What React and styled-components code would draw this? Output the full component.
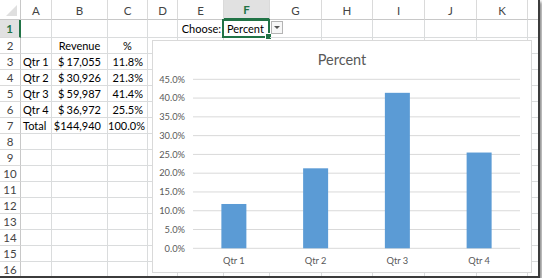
import React from 'react';
import styled, { createGlobalStyle } from 'styled-components';

const GlobalStyle = createGlobalStyle`
  body {
    margin: 0;
    background: #ffffff;
    font-family: Lato, 'Liberation Sans', sans-serif;
  }
`;

const COLS = ['A', 'B', 'C', 'D', 'E', 'F', 'G', 'H', 'I', 'J', 'K', ''];
const COL_WIDTHS = [21, 31, 56, 40, 30, 46, 46, 52, 51, 52, 52, 51, 20];
const ROW_COUNT = 16;

const quarters = [
  { name: 'Qtr 1', revenue: '17,055', pct: 11.8 },
  { name: 'Qtr 2', revenue: '30,926', pct: 21.3 },
  { name: 'Qtr 3', revenue: '59,987', pct: 41.4 },
  { name: 'Qtr 4', revenue: '36,972', pct: 25.5 },
];

const Frame = styled.div`
  position: relative;
  width: 538px;
  height: 276px;
  overflow: hidden;
  border-right: 2px solid #3c3c3c;
  border-bottom: 2px solid #3c3c3c;
  box-shadow: 2px 2px 3px rgba(0, 0, 0, 0.45);
`;

const Sheet = styled.div`
  display: grid;
  grid-template-columns: ${COL_WIDTHS.map((w) => `${w}px`).join(' ')};
  grid-template-rows: 20px 18px repeat(${ROW_COUNT - 1}, 16px);
  font-size: 11px;
  color: #000;
`;

const Corner = styled.div`
  position: relative;
  border-right: 1px solid #c8c8c8;
  border-bottom: 1px solid #c8c8c8;
  &::after {
    content: '';
    position: absolute;
    right: 3px;
    bottom: 3px;
    border-left: 11px solid transparent;
    border-bottom: 11px solid #dfdfdf;
  }
`;

const ColHead = styled.div`
  display: flex;
  align-items: center;
  justify-content: center;
  padding-top: 1px;
  box-sizing: border-box;
  font-size: 11.5px;
  background: ${(p) => (p.$active ? '#e1e1e1' : '#ffffff')};
  color: ${(p) => (p.$active ? '#217346' : '#444444')};
  font-weight: ${(p) => (p.$active ? 700 : 400)};
  border-right: 1px solid #dadada;
  border-bottom: ${(p) => (p.$active ? '2px solid #217346' : '1px solid #c8c8c8')};
`;

const RowHead = styled.div`
  display: flex;
  align-items: center;
  justify-content: center;
  box-sizing: border-box;
  font-size: 11.5px;
  background: ${(p) => (p.$active ? '#e1e1e1' : '#ffffff')};
  color: ${(p) => (p.$active ? '#217346' : '#444444')};
  font-weight: ${(p) => (p.$active ? 700 : 400)};
  border-right: ${(p) => (p.$active ? '2px solid #217346' : '1px solid #c8c8c8')};
  border-bottom: 1px solid #dadada;
`;

const Cell = styled.div`
  position: relative;
  display: flex;
  align-items: center;
  justify-content: ${(p) => p.$align || 'flex-start'};
  box-sizing: border-box;
  padding: 0 ${(p) => p.$padRight ?? 3}px 0 ${(p) => p.$padLeft ?? 3}px;
  border-right: 1px solid #dadcdd;
  border-bottom: 1px solid #dadcdd;
  white-space: nowrap;
  overflow: visible;
  z-index: ${(p) => (p.$front ? 2 : 'auto')};
`;

const Selection = styled.div`
  position: absolute;
  left: -2px;
  top: -1px;
  right: -1px;
  bottom: -1px;
  border: 2px solid #217346;
  pointer-events: none;
  &::after {
    content: '';
    position: absolute;
    right: -4px;
    bottom: -4px;
    width: 5px;
    height: 5px;
    background: #217346;
    border: 1px solid #ffffff;
  }
`;

const DropButton = styled.div`
  position: absolute;
  left: 1px;
  top: 1px;
  width: 12px;
  height: 13px;
  box-sizing: border-box;
  border: 1px solid #b4b4b4;
  background: #f7f7f7;
  display: flex;
  align-items: center;
  justify-content: center;
  &::before {
    content: '';
    border-left: 3px solid transparent;
    border-right: 3px solid transparent;
    border-top: 3px solid #555;
  }
`;

const ChartBox = styled.div`
  position: absolute;
  left: 152px;
  top: 40px;
  width: 380px;
  height: 233px;
  box-sizing: border-box;
  background: #ffffff;
  border: 1px solid #d9d9d9;
  display: flex;
  flex-direction: column;
  z-index: 3;
`;

const ChartTitle = styled.div`
  height: 30px;
  display: flex;
  align-items: center;
  justify-content: center;
  padding-top: 6px;
  box-sizing: border-box;
  font-size: 14.5px;
  color: #595959;
`;

const Plot = styled.svg`
  display: block;
  font-family: Lato, 'Liberation Sans', sans-serif;
  font-size: 9.3px;
  fill: #595959;
`;

function Chart() {
  const zeroY = 177.3;
  const unit = 169 / 45;
  const left = 40;
  const right = 367;
  const band = (right - left) / quarters.length;
  const ticks = [0, 5, 10, 15, 20, 25, 30, 35, 40, 45];
  return (
    <ChartBox>
      <ChartTitle>Percent</ChartTitle>
      <Plot width="378" height="201" viewBox="0 0 378 201">
        {ticks.map((t) => {
          const y = zeroY - t * unit;
          return (
            <g key={t}>
              <line x1={left} x2={right} y1={y} y2={y} stroke="#d9d9d9" strokeWidth="1" />
              <text x="32" y={y + 3.3} textAnchor="end">
                {t.toFixed(1)}%
              </text>
            </g>
          );
        })}
        {quarters.map((q, i) => {
          const cx = left + band * (i + 0.5);
          const h = q.pct * unit;
          return (
            <g key={q.name}>
              <rect x={cx - 12.5} y={zeroY - h} width="25" height={h} fill="#5b9bd5" />
              <text x={cx} y="193" textAnchor="middle">
                {q.name}
              </text>
            </g>
          );
        })}
      </Plot>
    </ChartBox>
  );
}

function cellContent(row, col) {
  if (row === 1) {
    if (col === 'E') return { text: 'Choose:', align: 'flex-end', padRight: 2, front: true };
    if (col === 'F') return { text: 'Percent', selected: true };
    if (col === 'G') return { drop: true };
  }
  if (row === 2) {
    if (col === 'B') return { text: 'Revenue', align: 'center' };
    if (col === 'C') return { text: '%', align: 'center' };
  }
  const q = quarters[row - 3];
  if (q) {
    if (col === 'A') return { text: q.name, padLeft: 2 };
    if (col === 'B') return { money: q.revenue };
    if (col === 'C') return { text: `${q.pct.toFixed(1)}%`, align: 'flex-end', padRight: 4 };
  }
  if (row === 7) {
    if (col === 'A') return { text: 'Total', padLeft: 2 };
    if (col === 'B') return { money: '144,940', tight: true };
    if (col === 'C') return { text: '100.0%', align: 'flex-end', padRight: 2 };
  }
  return null;
}

export default function App() {
  const rows = Array.from({ length: ROW_COUNT }, (_, i) => i + 1);
  return (
    <Frame>
      <GlobalStyle />
      <Sheet>
        <Corner />
        {COLS.map((c, i) => (
          <ColHead key={i} $active={c === 'F'}>
            {c}
          </ColHead>
        ))}
        {rows.map((r) => (
          <React.Fragment key={r}>
            <RowHead $active={r === 1}>{r}</RowHead>
            {COLS.map((c, i) => {
              const info = cellContent(r, c);
              if (!info) return <Cell key={i} />;
              if (info.money) {
                return (
                  <Cell
                    key={i}
                    $align={info.tight ? 'flex-end' : 'space-between'}
                    $padLeft={6}
                    $padRight={6}
                  >
                    <span>$</span>
                    <span>{info.money}</span>
                  </Cell>
                );
              }
              return (
                <Cell
                  key={i}
                  $align={info.align}
                  $padLeft={info.padLeft}
                  $padRight={info.padRight}
                  $front={info.front || info.selected || info.drop}
                >
                  {info.text}
                  {info.selected && <Selection />}
                  {info.drop && <DropButton />}
                </Cell>
              );
            })}
          </React.Fragment>
        ))}
      </Sheet>
      <Chart />
    </Frame>
  );
}
